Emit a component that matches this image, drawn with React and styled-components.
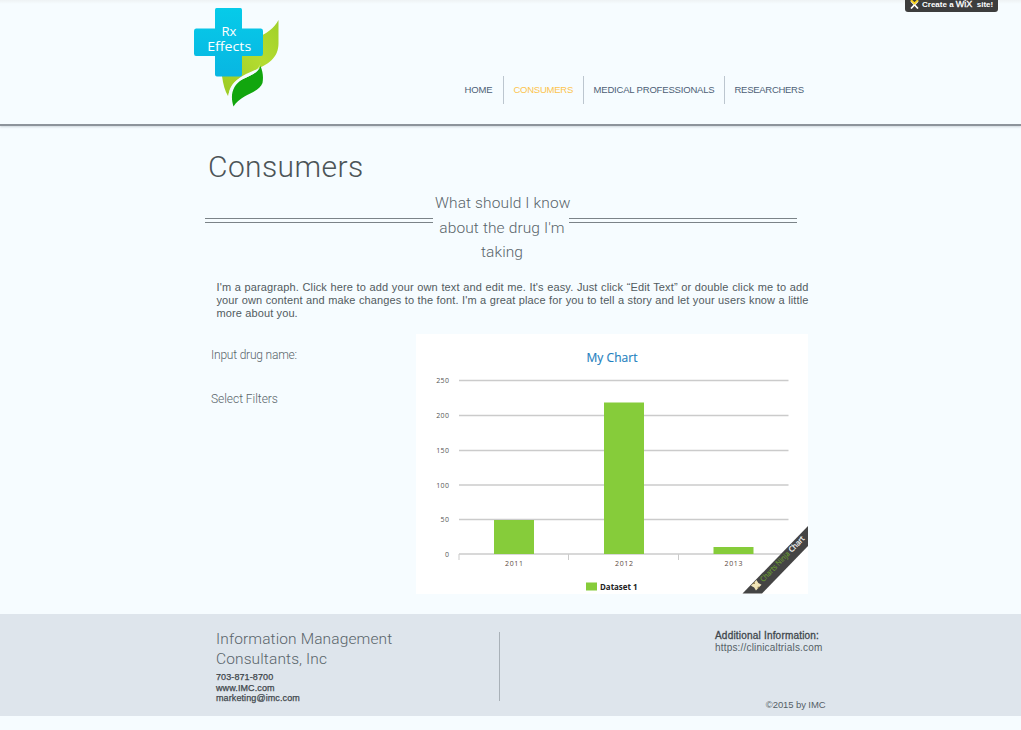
import React from "react";
import styled, { createGlobalStyle } from "styled-components";

const sans = `"Liberation Sans", Arial, sans-serif`;
const din = `Roboto, "Open Sans", sans-serif`;

const GlobalStyle = createGlobalStyle`
  * { box-sizing: border-box; }
  body { margin: 0; background: #f6fcff; font-family: ${sans}; color: #555f66; overflow: hidden; }
  h1, h2, h3, p { margin: 0; font-weight: inherit; }
`;

const Page = styled.div`
  position: relative;
  display: flex;
  flex-direction: column;
  height: 730px;
  overflow: hidden;
`;

const Header = styled.header`
  display: flex;
  height: 126px;
  padding-left: 190px;
  border-bottom: 2px solid #8d949b;
  background: linear-gradient(#eef2f4, #f6fcff 4px);
  box-shadow: 0 1px 2px rgba(90, 100, 110, 0.25);
`;

const Nav = styled.nav`
  display: flex;
  height: 28px;
  margin: 76px 0 0 164px;
`;

const NavItem = styled.a`
  width: ${(p) => p.$width}px;
  padding-left: 9.5px;
  border-left: 1px solid ${(p) => (p.$first ? "transparent" : "#bcc6cf")};
  font-size: 9.5px;
  line-height: 28px;
  white-space: nowrap;
  letter-spacing: ${(p) => p.$spacing}px;
  color: ${(p) => (p.$active ? "#fcc44e" : "#4d5e76")};
`;

const WixBadge = styled.div`
  position: absolute;
  top: -4px;
  left: 905px;
  display: flex;
  align-items: center;
  width: 93px;
  height: 16px;
  padding-left: 5px;
  gap: 3px;
  border-radius: 0 0 3px 3px;
  background: #3d3d3d;
  color: #fff;
  font-size: 8px;
  font-weight: bold;
  white-space: pre;
  letter-spacing: 0;
`;

const Wix = styled.span`
  font-size: 9px;
  font-weight: normal;
  -webkit-text-stroke: 0.3px #fff;
`;

const Main = styled.main`
  display: flex;
  flex-direction: column;
  width: 617px;
  height: 488px;
  margin-left: 204px;
`;

const Title = styled.h1`
  height: 64px;
  padding: 21px 0 0 4px;
  font: 300 30px/40px ${din};
  letter-spacing: 0.4px;
  color: #4c5457;
`;

const Subtitle = styled.div`
  display: flex;
  width: 593px;
  height: 76px;
  padding-left: 1px;
`;

const DoubleRule = styled.div`
  flex: 1;
  height: 5px;
  margin-top: 28px;
  border: solid #7b8388;
  border-width: 1px 0;
`;

const Question = styled.h2`
  width: 136px;
  padding: 1px 0 0 2px;
  font: 300 15.5px/24.5px ${din};
  letter-spacing: 0.12px;
  text-align: center;
  white-space: nowrap;
  color: #59646a;
`;

const Paragraph = styled.p`
  width: 592px;
  margin: 15px 0 0 12.5px;
  font-size: 11px;
  line-height: 13px;
  color: #525b60;
`;

const Line = styled.span`
  display: block;
  white-space: nowrap;
  text-align-last: ${(p) => (p.$last ? "left" : "justify")};
  letter-spacing: 0.12px;
`;

const Workspace = styled.section`
  display: flex;
  margin-top: 14px;
`;

const Filters = styled.div`
  display: flex;
  flex-direction: column;
  gap: 24px;
  width: 212px;
  padding: 11px 0 0 7px;
`;

const FieldLabel = styled.p`
  font: 300 12px/20px ${din};
  letter-spacing: ${(p) => p.$spacing}px;
  color: #59646a;
`;

const ChartCard = styled.div`
  width: 392px;
  height: 260px;
  background: #fff;
`;

const Footer = styled.footer`
  display: flex;
  height: 102px;
  padding-left: 216px;
  background: #dee5ec;
`;

const Company = styled.div`
  width: 284px;
  height: 69px;
  margin-top: 18px;
  border-right: 1px solid #a9b1b8;
`;

const CompanyName = styled.h3`
  margin-top: -3px;
  font: 300 15.5px/20px ${din};
  letter-spacing: 0.12px;
  color: #59646a;
`;

const Contact = styled.p`
  padding-top: 3px;
  font-size: 9px;
  line-height: 10.5px;
  letter-spacing: 0.1px;
  color: #3f474c;
  -webkit-text-stroke: 0.25px #3f474c;
`;

const Info = styled.div`
  display: flex;
  flex-direction: column;
  width: 110.5px;
  margin: 16px 0 0 215px;
  font-size: 10px;
  line-height: 12px;
  white-space: nowrap;
`;

const InfoHeading = styled.h3`
  font-size: 10px;
  letter-spacing: 0.2px;
  color: #3f474c;
  -webkit-text-stroke: 0.3px #3f474c;
`;

const InfoLink = styled.p`
  letter-spacing: 0.18px;
`;

const Copyright = styled.p`
  margin-top: 45px;
  font-size: 9.5px;
  text-align: right;
  letter-spacing: -0.1px;
`;

function Logo() {
  return (
    <svg width="100" height="120" viewBox="190 0 100 120">
      <defs>
        <linearGradient id="leaf" x1="0" y1="1" x2="1" y2="0">
          <stop offset="0" stopColor="#9bcb24" />
          <stop offset="0.6" stopColor="#b4dc30" />
          <stop offset="1" stopColor="#9fd02a" />
        </linearGradient>
        <linearGradient id="cross" x1="0" y1="0" x2="0" y2="1">
          <stop offset="0" stopColor="#06cbe9" />
          <stop offset="1" stopColor="#08b6e2" />
        </linearGradient>
      </defs>
      <path d="M278.5 20C274 28 267 34 255 38L222 76C223 84 225 91 228 96C231 85 236 79 246 74C264 66 279 61 278.5 42Z" fill="url(#leaf)" />
      <path d="M260.5 66C263 72 263.5 77 262.5 83C259 93 241 94 233.5 106.5C230 96 232 85 243 79C252 75 258 73 260.5 66Z" fill="#12a60e" />
      <path d="M261 62C258 72 252 73 245 76C233 80 229 88 228.5 96C231 86 236 82 243 79C252 75 258 73 261 62Z" fill="#f6fcff" />
      <path d="M216.5 8H240.5Q242 8 242 10V28.5H261Q263 28.5 263 31V53.5Q263 56 261 56H242V74.5Q242 76.5 240 76.5H217Q215 76.5 215 74.5V56H196Q194 56 194 53.5V31Q194 28.5 196 28.5H215V10Q215 8 216.5 8Z" fill="url(#cross)" />
      <g fill="#fff" fontFamily="'Open Sans', 'Noto Sans', sans-serif" fontSize="13.5" textAnchor="middle">
        <text x="229" y="35.5" textLength="15" lengthAdjust="spacingAndGlyphs">Rx</text>
        <text x="229.2" y="51" textLength="44" lengthAdjust="spacingAndGlyphs">Effects</text>
      </g>
    </svg>
  );
}

const ticks = [
  [250, 380.5], [200, 415.5], [150, 450.5], [100, 485], [50, 519.5], [0, 554],
];
const bars = [
  { year: 2011, x: 494, top: 520 },
  { year: 2012, x: 604, top: 402.5 },
  { year: 2013, x: 713.5, top: 547 },
];

function Chart() {
  return (
    <svg width="392" height="260" viewBox="416 334 392 260" fontFamily="'Open Sans', 'DejaVu Sans', sans-serif">
      <text x="586.5" y="362" fontSize="12" textLength="51" fill="#1f7fc0" stroke="#1f7fc0" strokeWidth="0.15">My Chart</text>
      {ticks.map(([value, y]) => (
        <g key={value}>
          <line x1="459" x2="788.5" y1={y} y2={y} stroke="#cbcbcb" strokeWidth="1.4" />
          <text x="449.5" y={y + 2.5} fontSize="7" letterSpacing="0.45" textAnchor="end" fill="#555">{value}</text>
        </g>
      ))}
      {[459, 568.5, 678.5].map((x) => (
        <line key={x} x1={x} x2={x} y1="554" y2="560" stroke="#cbcbcb" />
      ))}
      {bars.map((b) => (
        <g key={b.year}>
          <rect x={b.x} y={b.top} width="40" height={554 - b.top} fill="#86cc3a" />
          <text x={b.x + 11} y="566" fontSize="7" textLength="18" fill="#5b4a40">{b.year}</text>
        </g>
      ))}
      <rect x="586" y="582.5" width="11" height="8" fill="#86cc3a" />
      <text x="600" y="590" fontSize="8" fontWeight="bold" textLength="37.5" lengthAdjust="spacingAndGlyphs" fill="#222">Dataset 1</text>
      <path d="M742.5 593.5L808 526V546L762 593.5Z" fill="#444" />
      <g transform="translate(756 592) rotate(-46)">
        <path d="M1 -8H9L8 -4.5L9 -1H1L2 -4.5Z" fill="#f1e5b8" />
        <path d="M3.5 -8H6.5L5 -6.5ZM3.5 -1H6.5L5 -2.5Z" fill="#8a7440" />
        <text x="12" y="-1.5" fontSize="7.5" fill="#6a9c33" stroke="#6a9c33" strokeWidth="0.15" textLength="39" lengthAdjust="spacingAndGlyphs">Charts Ninja</text>
        <text x="53" y="-1.5" fontSize="7.5" fill="#fff" stroke="#fff" strokeWidth="0.2" textLength="19" lengthAdjust="spacingAndGlyphs">Chart</text>
      </g>
    </svg>
  );
}

export default function App() {
  return (
    <Page>
      <GlobalStyle />
      <Header>
        <Logo />
        <Nav>
          <NavItem $first $width={49} $spacing={-0.15}>HOME</NavItem>
          <NavItem $active $width={80} $spacing={-0.25}>CONSUMERS</NavItem>
          <NavItem $width={141} $spacing={-0.18}>MEDICAL PROFESSIONALS</NavItem>
          <NavItem $width={90} $spacing={-0.28}>RESEARCHERS</NavItem>
        </Nav>
      </Header>
      <WixBadge>
        <svg width="9" height="9" viewBox="0 0 9 9">
          <path d="M1 1L8 8.5M8 1L1 8.5" stroke="#fff" strokeWidth="1.7" />
          <path d="M1 0L4.5 3.5L8 0" stroke="#f5d21c" strokeWidth="1.8" fill="none" />
        </svg>
        <span>Create a <Wix>WiX</Wix>  site!</span>
      </WixBadge>
      <Main>
        <Title>Consumers</Title>
        <Subtitle>
          <DoubleRule />
          <Question>What should I know<br />about the drug I'm<br />taking</Question>
          <DoubleRule />
        </Subtitle>
        <Paragraph>
          <Line>I'm a paragraph. Click here to add your own text and edit me. It's easy. Just click “Edit Text” or double click me to add</Line>
          <Line>your own content and make changes to the font. I'm a great place for you to tell a story and let your users know a little</Line>
          <Line $last>more about you.</Line>
        </Paragraph>
        <Workspace>
          <Filters>
            <FieldLabel $spacing={-0.2}>Input drug name:</FieldLabel>
            <FieldLabel $spacing={-0.05}>Select Filters</FieldLabel>
          </Filters>
          <ChartCard><Chart /></ChartCard>
        </Workspace>
      </Main>
      <Footer>
        <Company>
          <CompanyName>Information Management<br />Consultants, Inc</CompanyName>
          <Contact>703-871-8700<br />www.IMC.com<br />marketing@imc.com</Contact>
        </Company>
        <Info>
          <InfoHeading>Additional Information:</InfoHeading>
          <InfoLink>https://clinicaltrials.com</InfoLink>
          <Copyright>©2015 by IMC</Copyright>
        </Info>
      </Footer>
    </Page>
  );
}
